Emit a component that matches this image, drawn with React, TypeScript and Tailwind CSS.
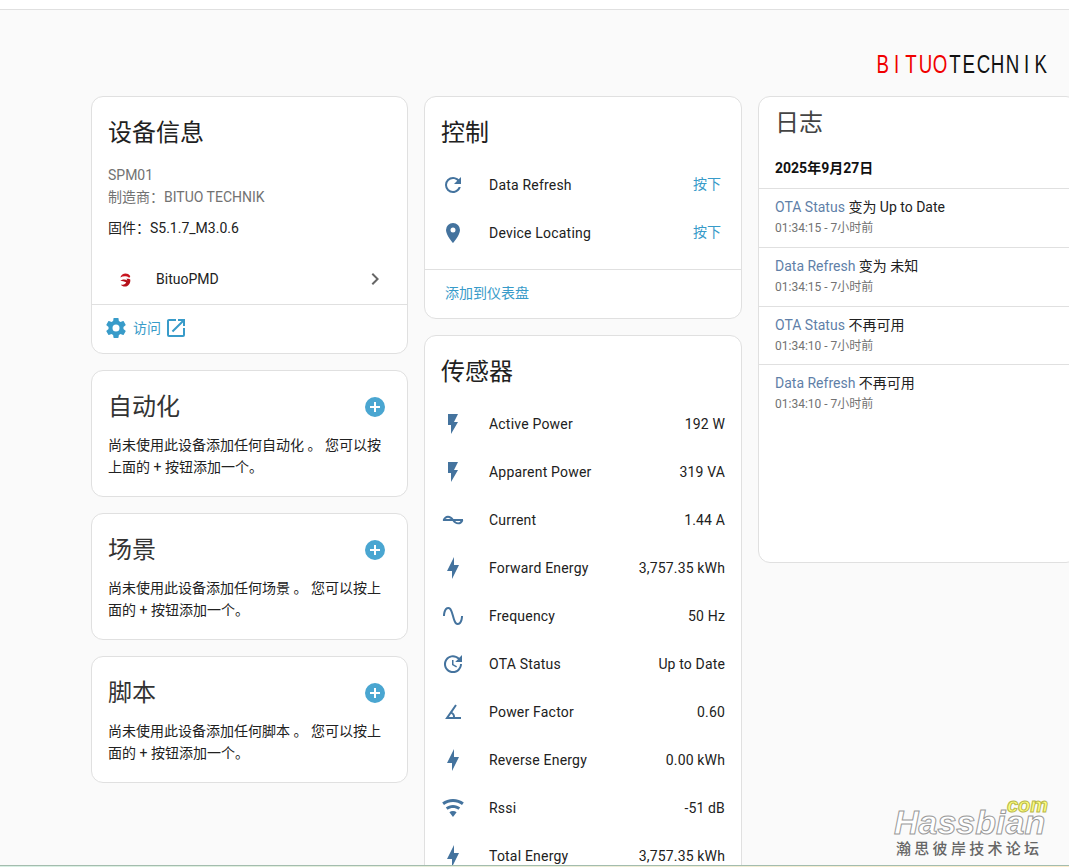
const FONT = "font-['Roboto','Noto_Sans_CJK_SC',sans-serif]"

const ICONS = {
  refresh: 'M17.65,6.35C16.2,4.9 14.21,4 12,4A8,8 0 0,0 4,12A8,8 0 0,0 12,20C15.73,20 18.84,17.45 19.73,14H17.65C16.83,16.33 14.61,18 12,18A6,6 0 0,1 6,12A6,6 0 0,1 12,6C13.66,6 15.14,6.69 16.22,7.78L13,11H20V4L17.65,6.35Z',
  marker: 'M12,11.5A2.5,2.5 0 0,1 9.5,9A2.5,2.5 0 0,1 12,6.5A2.5,2.5 0 0,1 14.5,9A2.5,2.5 0 0,1 12,11.5M12,2A7,7 0 0,0 5,9C5,14.25 12,22 12,22C12,22 19,14.25 19,9A7,7 0 0,0 12,2Z',
  flash: 'M7,2V13H10V22L17,10H13L17,2H7Z',
  bolt: 'M11 15H6L13 1V9H18L11 23V15Z',
  sine: 'M16.5,21C13.5,21 12.31,16.76 11.05,12.28C10.14,9.04 9,5 7.5,5C4.11,5 4,11.93 4,12H2C2,11.63 2.06,3 7.5,3C10.5,3 11.71,7.25 12.97,11.74C13.83,14.8 15,19 16.5,19C19.94,19 20.03,12.07 20.03,12H22.03C22.03,12.37 21.97,21 16.5,21Z',
  update: 'M21,10.12H14.22L16.96,7.3C14.23,4.6 9.81,4.5 7.08,7.2C4.35,9.91 4.35,14.28 7.08,17C9.81,19.7 14.23,19.7 16.96,17C18.32,15.65 19,14.08 19,12.1H21C21,14.08 20.12,16.65 18.36,18.39C14.85,21.87 9.15,21.87 5.64,18.39C2.14,14.92 2.11,9.28 5.62,5.81C9.13,2.34 14.76,2.34 18.27,5.81L21,3V10.12M12.5,8V12.25L16,14.33L15.28,15.54L11,13V8H12.5Z',
  angle: 'M20,19H4.09L14.18,4.43L15.82,5.57L11.28,12.13C12.89,12.96 14,14.62 14,16.54C14,16.7 14,16.85 13.97,17H20V19M7.91,17H11.96C12,16.85 12,16.7 12,16.54C12,15.28 11.24,14.22 10.14,13.78L7.91,17Z',
  wifi: 'M12,21L15.6,16.2C14.6,15.45 13.35,15 12,15C10.65,15 9.4,15.45 8.4,16.2L12,21M12,3C7.95,3 4.21,4.34 1.2,6.6L3,9C5.5,7.12 8.62,6 12,6C15.38,6 18.5,7.12 21,9L22.8,6.6C19.79,4.34 16.05,3 12,3M12,9C9.3,9 6.81,9.89 4.8,11.4L6.6,13.8C8.1,12.67 9.97,12 12,12C14.03,12 15.9,12.67 17.4,13.8L19.2,11.4C17.19,9.89 14.7,9 12,9Z',
  cog: 'M12,15.5A3.5,3.5 0 0,1 8.5,12A3.5,3.5 0 0,1 12,8.5A3.5,3.5 0 0,1 15.5,12A3.5,3.5 0 0,1 12,15.5M19.43,12.97C19.47,12.65 19.5,12.33 19.5,12C19.5,11.67 19.47,11.34 19.43,11L21.54,9.37C21.73,9.22 21.78,8.95 21.66,8.73L19.66,5.27C19.54,5.05 19.27,4.96 19.05,5.05L16.56,6.05C16.04,5.66 15.5,5.32 14.87,5.07L14.5,2.42C14.46,2.18 14.25,2 14,2H10C9.75,2 9.54,2.18 9.5,2.42L9.13,5.07C8.5,5.32 7.96,5.66 7.44,6.05L4.95,5.05C4.73,4.96 4.46,5.05 4.34,5.27L2.34,8.73C2.21,8.95 2.27,9.22 2.46,9.37L4.57,11C4.53,11.34 4.5,11.67 4.5,12C4.5,12.33 4.53,12.65 4.57,12.97L2.46,14.63C2.27,14.78 2.21,15.05 2.34,15.27L4.34,18.73C4.46,18.95 4.73,19.03 4.95,18.95L7.44,17.94C7.96,18.34 8.5,18.68 9.13,18.93L9.5,21.58C9.54,21.82 9.75,22 10,22H14C14.25,22 14.46,21.82 14.5,21.58L14.87,18.93C15.5,18.67 16.04,18.34 16.56,17.94L19.05,18.95C19.27,19.03 19.54,18.95 19.66,18.73L21.66,15.27C21.78,15.05 21.73,14.78 21.54,14.63L19.43,12.97Z',
  open: 'M14,3V5H17.59L7.76,14.83L9.17,16.24L19,6.41V10H21V3M19,19H5V5H12V3H5C3.89,3 3,3.89 3,5V19A2,2 0 0,0 5,21H19A2,2 0 0,0 21,19V12H19V19Z',
  plus: 'M17,13H13V17H11V13H7V11H11V7H13V11H17M12,2A10,10 0 0,0 2,12A10,10 0 0,0 12,22A10,10 0 0,0 22,12A10,10 0 0,0 12,2Z',
  chevron: 'M8.59,16.58L13.17,12L8.59,7.41L10,6L16,12L10,18L8.59,16.58Z',
}

function Icon({ d, className }: { d: string; className: string }) {
  return (
    <svg viewBox="0 0 24 24" className={className} fill="currentColor">
      <path d={d} />
    </svg>
  )
}

// AC wave: outlined lobes over a mid line, easier as strokes than as a fill
function CurrentIcon() {
  return (
    <svg viewBox="0 0 24 24" className="h-6 w-6 text-[#44739e]" fill="none" stroke="currentColor" strokeWidth="1.9">
      <path d="M2.5 12.5C4.5 7.5 9 7.5 12 12C15 16.5 19.5 16.5 21.5 12M2 12H22" />
    </svg>
  )
}

const SENSORS = [
  { icon: ICONS.flash, name: 'Active Power', value: '192 W' },
  { icon: ICONS.flash, name: 'Apparent Power', value: '319 VA' },
  { icon: '', name: 'Current', value: '1.44 A' },
  { icon: ICONS.bolt, name: 'Forward Energy', value: '3,757.35 kWh' },
  { icon: ICONS.sine, name: 'Frequency', value: '50 Hz' },
  { icon: ICONS.update, name: 'OTA Status', value: 'Up to Date' },
  { icon: ICONS.angle, name: 'Power Factor', value: '0.60' },
  { icon: ICONS.bolt, name: 'Reverse Energy', value: '0.00 kWh' },
  { icon: ICONS.wifi, name: 'Rssi', value: '-51 dB' },
  { icon: ICONS.bolt, name: 'Total Energy', value: '3,757.35 kWh' },
]

const LOGS = [
  { name: 'OTA Status', text: '变为 Up to Date', time: '01:34:15 - 7小时前' },
  { name: 'Data Refresh', text: '变为 未知', time: '01:34:15 - 7小时前' },
  { name: 'OTA Status', text: '不再可用', time: '01:34:10 - 7小时前' },
  { name: 'Data Refresh', text: '不再可用', time: '01:34:10 - 7小时前' },
]

const cardClass = 'rounded-xl border border-[#e0e0e0] bg-white'

function Row({ icon, name, children }: { icon: string; name: string; children: React.ReactNode }) {
  return (
    <div className="flex h-12 items-center pl-[16px] pr-4">
      {icon ? <Icon d={icon} className="h-6 w-6 text-[#44739e]" /> : <CurrentIcon />}
      <span className="ml-[24px] flex-1 text-sm tracking-[0.2px] text-[#212121]">{name}</span>
      {children}
    </div>
  )
}

function EmptyCard({ title, lines }: { title: string; lines: string[] }) {
  return (
    <section className={`${cardClass} h-[127px] px-[16px] pt-[20px]`}>
      <div className="flex h-8 items-center justify-between pr-[4px]">
        <h2 className="text-2xl font-normal text-[#333]">{title}</h2>
        <Icon d={ICONS.plus} className="h-6 w-6 text-[#4aa6d1]" />
      </div>
      <div className="mt-[10.5px] text-sm leading-[22.5px] text-[#212121]">
        {lines.map((l) => (
          <div key={l}>{l}</div>
        ))}
      </div>
    </section>
  )
}

function BituoLogo() {
  return (
    <svg viewBox="0 0 24 24" preserveAspectRatio="none" className="h-[17px] w-[14px]">
      <path fill="#c8141e" d="M4 9C6 3 16 1 21 7C21 8 20 9 19 9.5C15 7 9 7 4 9Z" />
      <path fill="#b5101a" d="M4 14C9 11 13 12 16 13.5C15 12 15 11.5 14 11C17 10.5 20 11 21 12C22 17 18 22 12 22C9 22 6 21 5 19C9 20 13 19 14 16C11 14.5 7 14 4 14Z" />
    </svg>
  )
}

// the logo letters sit in equal cells, each one squeezed narrow
function LogoLetters({ text, className }: { text: string; className: string }) {
  return (
    <>
      {text.split('').map((c, i) => (
        <span key={i} className={`flex w-[14.4px] justify-center ${className}`}>
          <span className="inline-block scale-x-[0.72]">{c}</span>
        </span>
      ))}
    </>
  )
}

export default function App() {
  return (
    <div className={`relative h-[867px] w-[1069px] overflow-hidden bg-[#fafafa] ${FONT}`}>
      <div className="h-[10px] border-b border-[#e0e0e0] bg-white" />

      <div className="flex h-[86px] justify-end pr-[21px] pt-[40px]">
        <div className="flex font-['Liberation_Sans',sans-serif] text-[26px] leading-[29px]">
          <LogoLetters text="BITUO" className="text-[#f00000]" />
          <LogoLetters text="TECHNIK" className="text-[#111]" />
        </div>
      </div>

      <div className="ml-[91px] flex items-start gap-4">
        <div className="flex w-[317px] shrink-0 flex-col gap-4">
          <section className={`${cardClass} h-[258px]`}>
            <h2 className="px-4 pt-[20px] text-2xl leading-8 font-normal text-[#212121]">设备信息</h2>
            <div className="mt-[15px] px-4 text-sm leading-[22px] text-[#727272]">
              <div>SPM01</div>
              <div>制造商：BITUO TECHNIK</div>
            </div>
            <div className="mt-[9px] px-4 text-sm leading-[22px] text-[#212121]">固件：S5.1.7_M3.0.6</div>
            <div className="mt-[15px] flex h-[51px] items-center border-b border-[#e0e0e0] pl-[16px] pr-[20px]">
              <span className="flex w-6 justify-center pl-[9px]"><BituoLogo /></span>
              <span className="ml-[24px] flex-1 text-sm text-[#212121]">BituoPMD</span>
              <Icon d={ICONS.chevron} className="h-6 w-6 text-[#666]" />
            </div>
            <div className="flex h-[46px] items-center pl-[12px] text-[#389bc9]">
              <Icon d={ICONS.cog} className="h-6 w-6" />
              <span className="ml-[5px] text-sm">访问</span>
              <Icon d={ICONS.open} className="ml-[3px] h-6 w-6" />
            </div>
          </section>
          <EmptyCard title="自动化" lines={['尚未使用此设备添加任何自动化 。 您可以按', '上面的 + 按钮添加一个。']} />
          <EmptyCard title="场景" lines={['尚未使用此设备添加任何场景 。 您可以按上', '面的 + 按钮添加一个。']} />
          <EmptyCard title="脚本" lines={['尚未使用此设备添加任何脚本 。 您可以按上', '面的 + 按钮添加一个。']} />
        </div>

        <div className="flex w-[318px] shrink-0 flex-col gap-4">
          <section className={`${cardClass} h-[223px]`}>
            <h2 className="h-[64px] px-4 pt-[20px] text-2xl leading-8 font-normal text-[#212121]">控制</h2>
            <Row icon={ICONS.refresh} name="Data Refresh">
              <span className="mr-[4px] mb-[2px] text-sm text-[#389bc9]">按下</span>
            </Row>
            <Row icon={ICONS.marker} name="Device Locating">
              <span className="mr-[4px] mb-[2px] text-sm text-[#389bc9]">按下</span>
            </Row>
            <div className="mt-3 border-t border-[#e0e0e0] px-[20px] pt-[13px] text-sm text-[#389bc9]">添加到仪表盘</div>
          </section>
          <section className={`${cardClass} pb-6`}>
            <h2 className="h-[64px] px-4 pt-[20px] text-2xl leading-8 font-normal text-[#212121]">传感器</h2>
            {SENSORS.map((s) => (
              <Row key={s.name} icon={s.icon} name={s.name}>
                <span className="text-sm tracking-[0.15px] text-[#212121]">{s.value}</span>
              </Row>
            ))}
          </section>
        </div>

        <section className={`${cardClass} h-[467px] w-[320px] shrink-0`}>
          <h2 className="px-[16px] pt-[10px] text-2xl leading-8 font-normal text-[#444]">日志</h2>
          <div className="flex h-[49px] items-end pb-[10px] pl-[16px] text-sm font-bold text-[#111]">2025年9月27日</div>
          {LOGS.map((l, i) => (
            <div key={i} className="h-[58.8px] border-t border-[#e0e0e0] px-4 pt-[8px]">
              <div className="text-sm leading-5 text-[#212121]">
                <span className="text-[#5f7fa8]">{l.name}</span> {l.text}
              </div>
              <div className="mt-[3px] text-xs leading-4 text-[#727272]">{l.time}</div>
            </div>
          ))}
        </section>
      </div>

      {/* forum watermark over the page */}
      <div className="absolute left-[894px] top-[798px] flex w-[154px] flex-col">
        <div className="self-end font-['Liberation_Sans',sans-serif] text-[20px] leading-[14px] font-bold italic text-[#ffff80] [-webkit-text-stroke:1px_#b9b94a]">com</div>
        <div className="-mt-[4px] font-['Liberation_Sans',sans-serif] text-[34px] leading-[28px] font-bold italic text-white [-webkit-text-stroke:1px_#999]">Hassbian</div>
        <div className="mt-[3px] pl-[2px] text-[15px] leading-[20px] font-medium tracking-[3.3px] text-[#666]">瀚思彼岸技术论坛</div>
      </div>

      <div className="absolute inset-x-0 bottom-0 h-[2px] border-t border-[#a3bcae] bg-gradient-to-r from-[#d8f0e4] to-[#fdeccd]" />
    </div>
  )
}
